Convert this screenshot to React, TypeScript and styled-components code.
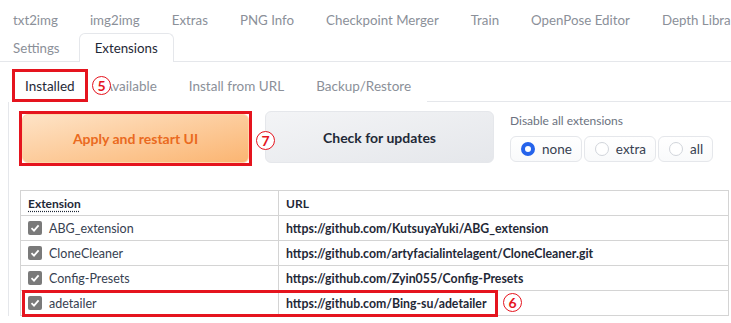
import React from 'react';
import styled, { createGlobalStyle } from 'styled-components';

const GlobalStyle = createGlobalStyle`
  body {
    margin: 0;
    background: #ffffff;
    font-family: Lato, 'Noto Sans', sans-serif;
    color: #1f2937;
  }
`;

const RED = '#e5141e';

const Page = styled.div`
  position: relative;
  width: 731px;
  height: 323px;
  overflow: hidden;
`;

const TabNav = styled.div`
  padding-top: 5px;
  border-bottom: 1px solid #e5e7eb;
`;

const TabLine = styled.div`
  display: flex;
  flex-wrap: nowrap;
  gap: 3px;
  margin-left: -2px;
  white-space: nowrap;
`;

const Tab = styled.div<{ $active?: boolean }>`
  padding: 0 13px 0 14px;
  display: flex;
  align-items: center;
  font-size: 13.3px;
  color: ${({ $active }) => ($active ? '#1f2937' : '#8b9099')};
  border: 1px solid ${({ $active }) => ($active ? '#e5e7eb' : 'transparent')};
  border-bottom: none;
  border-radius: 6px 6px 0 0;
  background: #fff;
  margin-bottom: ${({ $active }) => ($active ? '-1px' : '0')};
  box-sizing: border-box;
  height: ${({ $active }) => ($active ? '29px' : '28px')};
`;

const ActiveTab = styled(Tab)`
  padding: 0 15px;
  margin-left: 2px;
`;

const SubNav = styled.div`
  display: flex;
  align-items: stretch;
  height: 32px;
  margin-top: 7px;
  margin-left: 12px;
  border-bottom: 1px solid #e5e7eb;
`;

const SubTab = styled.div<{ $marked?: boolean }>`
  display: flex;
  align-items: center;
  padding: 0 ${({ $marked }) => ($marked ? '10px' : '16px')};
  font-size: 13.5px;
  color: ${({ $marked }) => ($marked ? '#1f2937' : '#8b9099')};
  border: ${({ $marked }) => ($marked ? `3px solid ${RED}` : 'none')};
  box-sizing: border-box;
  margin-bottom: -1px;
  background: #fff;
`;

const Panel = styled.div`
  margin-left: 8px;
  border-left: 1px solid #e5e7eb;
  padding: 9px 0 0 10px;
`;

const ControlRow = styled.div`
  display: flex;
  align-items: flex-start;
  gap: 13px;
`;

const Marked = styled.div`
  border: 3px solid ${RED};
  line-height: 0;
`;

const BigButton = styled.button<{ $primary?: boolean }>`
  width: ${({ $primary }) => ($primary ? '227px' : '229px')};
  height: ${({ $primary }) => ($primary ? '49px' : '52px')};
  border-radius: 6px;
  font-family: inherit;
  font-size: 14px;
  font-weight: 700;
  cursor: pointer;
  border: 1px solid ${({ $primary }) => ($primary ? '#fed7aa' : '#e5e7eb')};
  color: ${({ $primary }) => ($primary ? '#ea6a1e' : '#1f2937')};
  background: ${({ $primary }) =>
    $primary
      ? 'linear-gradient(to bottom right, #fee3c6, #fbb572)'
      : 'linear-gradient(to bottom right, #f3f4f6, #e5e7eb)'};
`;

const DisableBlock = styled.div`
  display: flex;
  flex-direction: column;
  gap: 8px;
  margin-left: 3px;
  padding-top: 2px;
`;

const DisableLabel = styled.div`
  font-size: 12px;
  color: #6b7280;
`;

const RadioGroup = styled.div`
  display: flex;
  gap: 2px;
`;

const RadioOption = styled.label`
  display: flex;
  align-items: center;
  gap: 7px;
  height: 26px;
  padding: 0 9px 0 10px;
  box-sizing: border-box;
  border: 1px solid #e5e7eb;
  border-radius: 6px;
  background: linear-gradient(#ffffff, #f9fafb);
  font-size: 13.5px;
  color: #374151;
`;

const RadioDot = styled.span<{ $checked?: boolean }>`
  width: 14px;
  height: 14px;
  border-radius: 50%;
  box-sizing: border-box;
  background: #fff;
  border: ${({ $checked }) => ($checked ? '4px solid #2563eb' : '1px solid #d1d5db')};
`;

const TableWrap = styled.div`
  position: relative;
  margin-top: 24px;
  margin-left: 1px;
`;

const Table = styled.table`
  width: 709px;
  table-layout: fixed;
  border-collapse: collapse;
  font-size: 12.5px;
  td,
  th {
    border: 1px solid #d4d4d4;
    height: 24px;
    padding: 0 7px;
    text-align: left;
    white-space: nowrap;
    overflow: hidden;
  }
  th {
    font-weight: 700;
    font-size: 12px;
  }
`;

const HeadCell = styled.th<{ $width?: number }>`
  width: ${({ $width }) => ($width ? `${$width}px` : 'auto')};
`;

const Abbr = styled.span`
  text-decoration: underline dotted;
  text-underline-offset: 3px;
`;

const NameCell = styled.td`
  color: #374151;
`;

const NameInner = styled.div`
  display: flex;
  align-items: center;
  gap: 7px;
  font-size: 12.5px;
`;

const Check = styled.span`
  width: 14px;
  height: 14px;
  border-radius: 2px;
  background: #7a7a7a;
  display: inline-flex;
  align-items: center;
  justify-content: center;
`;

const UrlCell = styled.td`
  font-weight: 700;
  font-size: 12.3px;
  color: #1f2937;
`;

const RowMark = styled.div`
  position: absolute;
  left: 2px;
  top: 100px;
  width: 476px;
  height: 27px;
  border: 3px solid ${RED};
  box-sizing: border-box;
  pointer-events: none;
`;

const Badge = styled.span<{ $x: number; $y: number }>`
  position: absolute;
  left: ${({ $x }) => $x}px;
  top: ${({ $y }) => $y}px;
  width: 19px;
  height: 19px;
  border: 1.5px solid ${RED};
  border-radius: 50%;
  box-sizing: border-box;
  display: flex;
  align-items: center;
  justify-content: center;
  color: ${RED};
  font-size: 14px;
  font-weight: 700;
  background: #fff;
`;

const extensions = [
  { name: 'ABG_extension', url: 'https://github.com/KutsuyaYuki/ABG_extension' },
  { name: 'CloneCleaner', url: 'https://github.com/artyfacialintelagent/CloneCleaner.git' },
  { name: 'Config-Presets', url: 'https://github.com/Zyin055/Config-Presets' },
  { name: 'adetailer', url: 'https://github.com/Bing-su/adetailer' },
];

// the last tab runs past the right edge of the screenshot
const topTabs = ['txt2img', 'img2img', 'Extras', 'PNG Info', 'Checkpoint Merger', 'Train', 'OpenPose Editor', 'Depth Librar'];

const CheckMark = () => (
  <Check>
    <svg width="10" height="10" viewBox="0 0 10 10">
      <path d="M1.5 5.2 L4 7.6 L8.6 2.4" fill="none" stroke="#fff" strokeWidth="1.8" />
    </svg>
  </Check>
);

const App: React.FC = () => (
  <Page>
    <GlobalStyle />
    <TabNav>
      <TabLine>
        {topTabs.map((t) => (
          <Tab key={t}>{t}</Tab>
        ))}
      </TabLine>
      <TabLine>
        <Tab>Settings</Tab>
        <ActiveTab $active>Extensions</ActiveTab>
      </TabLine>
    </TabNav>

    <SubNav>
      <SubTab $marked>Installed</SubTab>
      <SubTab>Available</SubTab>
      <SubTab>Install from URL</SubTab>
      <SubTab>Backup/Restore</SubTab>
    </SubNav>

    <Panel>
      <ControlRow>
        <Marked>
          <BigButton $primary>Apply and restart UI</BigButton>
        </Marked>
        <BigButton>Check for updates</BigButton>
        <DisableBlock>
          <DisableLabel>Disable all extensions</DisableLabel>
          <RadioGroup>
            <RadioOption>
              <RadioDot $checked />
              none
            </RadioOption>
            <RadioOption>
              <RadioDot />
              extra
            </RadioOption>
            <RadioOption>
              <RadioDot />
              all
            </RadioOption>
          </RadioGroup>
        </DisableBlock>
      </ControlRow>

      <TableWrap>
        <Table>
          <thead>
            <tr>
              <HeadCell $width={243}>
                <Abbr>Extension</Abbr>
              </HeadCell>
              <HeadCell>URL</HeadCell>
            </tr>
          </thead>
          <tbody>
            {extensions.map((e) => (
              <tr key={e.name}>
                <NameCell>
                  <NameInner>
                    <CheckMark />
                    {e.name}
                  </NameInner>
                </NameCell>
                <UrlCell>{e.url}</UrlCell>
              </tr>
            ))}
          </tbody>
        </Table>
        <RowMark />
      </TableWrap>
    </Panel>

    <Badge $x={92} $y={76}>5</Badge>
    <Badge $x={256} $y={131}>7</Badge>
    <Badge $x={503} $y={293}>6</Badge>
  </Page>
);

export default App;
